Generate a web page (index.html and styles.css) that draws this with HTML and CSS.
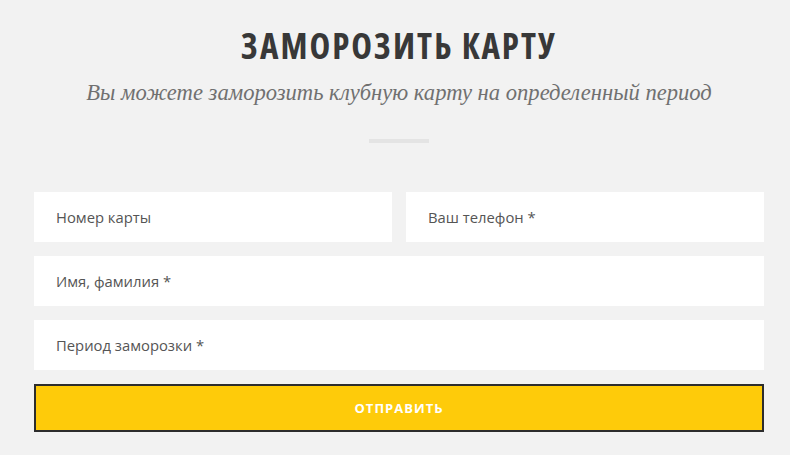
FILE: index.html
```html
<!DOCTYPE html>
<html lang="ru">
<head>
<meta charset="utf-8">
<link rel="stylesheet" href="styles.css">
</head>
<body>
<section class="freeze">
  <h1 class="title">ЗАМОРОЗИТЬ КАРТУ</h1>
  <p class="subtitle">Вы можете заморозить клубную карту на определенный период</p>
  <div class="divider"></div>
  <form class="form">
    <div class="row two">
      <div class="field">Номер карты</div>
      <div class="field">Ваш телефон *</div>
    </div>
    <div class="field">Имя, фамилия *</div>
    <div class="field">Период заморозки *</div>
    <div class="button">ОТПРАВИТЬ</div>
  </form>
</section>
</body>
</html>
```
FILE: styles.css
```css
html, body {
  margin: 0;
  padding: 0;
  background: #f2f2f2;
}
.freeze {
  width: 730px;
  margin-left: 34px;
  padding-top: 24px;
  display: flex;
  flex-direction: column;
  align-items: center;
}
.title {
  margin: 0;
  font-family: "Open Sans", sans-serif;
  font-weight: 700;
  font-stretch: 75%;
  font-size: 35px;
  line-height: 44px;
  letter-spacing: 2px;
  color: #383838;
}
.subtitle {
  margin: 11px 0 0;
  font-family: "Liberation Serif", serif;
  font-style: italic;
  font-size: 22.6px;
  line-height: 28px;
  color: #707070;
}
.divider {
  margin-top: 32px;
  width: 60px;
  height: 4px;
  background: #e4e4e4;
}
.form {
  margin-top: 49px;
  width: 100%;
  display: flex;
  flex-direction: column;
  gap: 14px;
}
.row.two {
  display: grid;
  grid-template-columns: 1fr 1fr;
  gap: 14px;
}
.field {
  height: 50px;
  background: #fff;
  padding-left: 22px;
  display: flex;
  align-items: center;
  font-family: "Open Sans", sans-serif;
  font-size: 14.8px;
  color: #555;
}
.button {
  height: 44px;
  border: 2px solid #2d2d2d;
  background: #fecb0a;
  display: flex;
  align-items: center;
  justify-content: center;
  font-family: "Open Sans", sans-serif;
  font-weight: 700;
  font-size: 13px;
  letter-spacing: 1px;
  color: #fff;
}
```
